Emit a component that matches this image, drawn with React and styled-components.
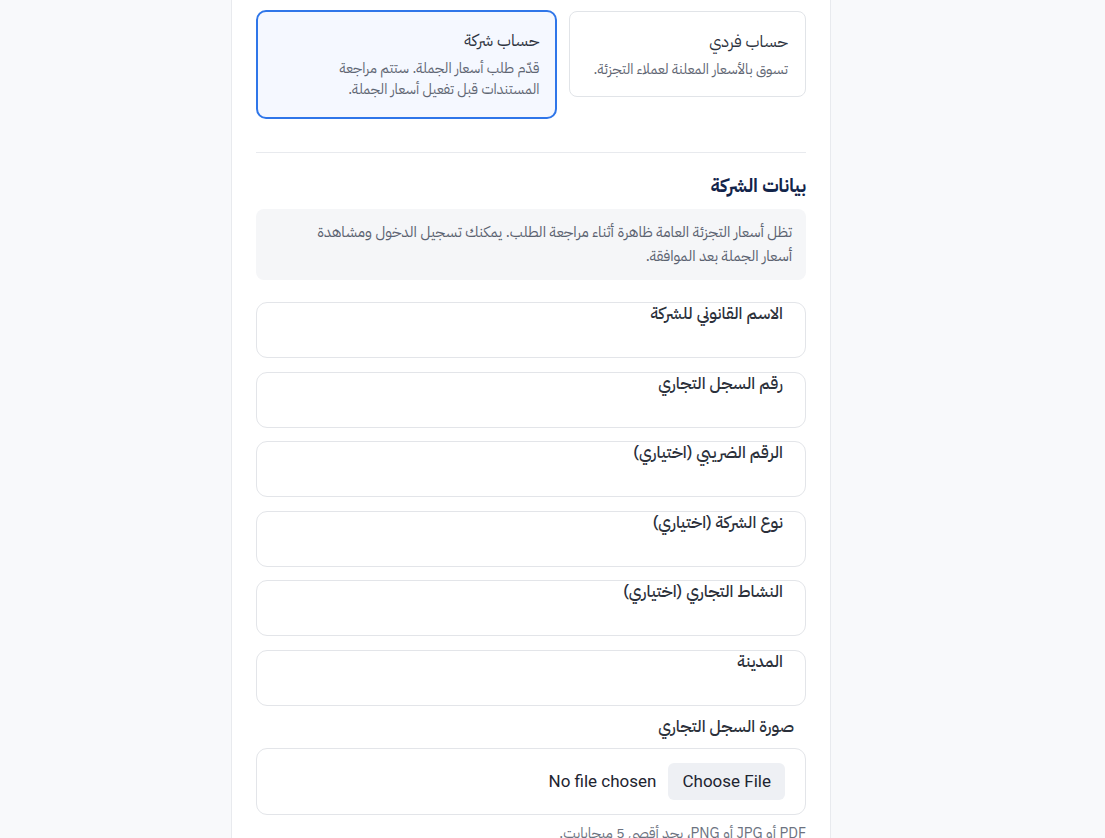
import React from 'react';
import styled, { createGlobalStyle } from 'styled-components';

const GlobalStyle = createGlobalStyle`
  html, body {
    margin: 0;
    padding: 0;
    background: #f8f9fb;
  }
  body {
    font-family: "IBM Plex Sans Arabic", "Noto Sans Arabic", "DejaVu Sans", sans-serif;
  }
`;

const Page = styled.div`
  display: flex;
  justify-content: center;
  padding-right: 43px;
  min-height: 838px;
`;

const Panel = styled.div`
  width: 550px;
  background: #ffffff;
  border-left: 1px solid #e8eaee;
  border-right: 1px solid #e8eaee;
  padding: 10px 24px 0;
  direction: rtl;
  display: flex;
  flex-direction: column;
`;

const AccountTypes = styled.div`
  display: grid;
  grid-template-columns: 237fr 302fr;
  gap: 12px;
  align-items: start;
`;

const AccountCard = styled.div`
  border: ${(p) => (p.$active ? '2px solid #2f76e9' : '1px solid #e1e4e8')};
  background: ${(p) => (p.$active ? '#f5f8ff' : '#ffffff')};
  border-radius: ${(p) => (p.$active ? '10px' : '8px')};
  padding: ${(p) => (p.$active ? '16px 16px 17px 16px' : '17px 17px 16px 17px')};
  margin-top: ${(p) => (p.$active ? '0' : '1px')};
`;

const AccountTitle = styled.div`
  font-size: 16.5px;
  color: #2d3340;
  line-height: 26px;
  margin-bottom: 4px;
`;

const AccountDesc = styled.div`
  font-size: 14.3px;
  color: #5f6673;
  line-height: 21px;
`;

const Divider = styled.hr`
  border: none;
  border-top: 1px solid #e8eaee;
  margin: 33px 0 20px;
`;

const SectionTitle = styled.h2`
  margin: 0 0 10px;
  font-size: 18.5px;
  font-weight: 700;
  color: #12244a;
  line-height: 26px;
`;

const Notice = styled.div`
  background: #f5f6f8;
  border-radius: 8px;
  padding: 11px 14px 12px 34px;
  font-size: 15px;
  line-height: 24px;
  color: #5b6270;
  margin-bottom: 22px;
`;

const Fields = styled.div`
  display: flex;
  flex-direction: column;
  gap: 13.6px;
`;

const FieldBox = styled.div`
  box-sizing: border-box;
  height: 56px;
  border: 1px solid #e3e5e9;
  border-radius: 11px;
  padding: 0 22px 0;
`;

const FieldLabel = styled.div`
  font-size: 16.8px;
  font-weight: 500;
  color: #2b303a;
  line-height: 22px;
`;

const UploadLabel = styled.div`
  font-size: 16.8px;
  font-weight: 500;
  color: #2b303a;
  line-height: 22px;
  padding: 10px 12px 0;
  margin-bottom: 10px;
`;

const UploadBox = styled.div`
  box-sizing: border-box;
  height: 67px;
  border: 1px solid #e3e5e9;
  border-radius: 11px;
  padding: 0 20px;
  display: flex;
  align-items: center;
  gap: 12px;
`;

const ChooseButton = styled.div`
  direction: ltr;
  background: #eef0f4;
  border-radius: 6px;
  padding: 0 14px;
  height: 37px;
  display: flex;
  align-items: center;
  font-family: "Roboto", "Liberation Sans", sans-serif;
  font-size: 17px;
  color: #1d2430;
`;

const FileStatus = styled.div`
  direction: ltr;
  font-family: "Roboto", "Liberation Sans", sans-serif;
  font-size: 17px;
  color: #1d2430;
`;

const Hint = styled.div`
  font-size: 14.5px;
  color: #6b7280;
  margin-top: 9px;
  line-height: 18px;
`;

const fields = [
  'الاسم القانوني للشركة',
  'رقم السجل التجاري',
  'الرقم الضريبي (اختياري)',
  'نوع الشركة (اختياري)',
  'النشاط التجاري (اختياري)',
  'المدينة',
];

export default function App() {
  return (
    <>
      <GlobalStyle />
      <Page>
        <Panel>
          <AccountTypes>
            <AccountCard>
              <AccountTitle>حساب فردي</AccountTitle>
              <AccountDesc>تسوق بالأسعار المعلنة لعملاء التجزئة.</AccountDesc>
            </AccountCard>
            <AccountCard $active>
              <AccountTitle>حساب شركة</AccountTitle>
              <AccountDesc>
                قدّم طلب أسعار الجملة. ستتم مراجعة
                <br />
                المستندات قبل تفعيل أسعار الجملة.
              </AccountDesc>
            </AccountCard>
          </AccountTypes>

          <Divider />

          <SectionTitle>بيانات الشركة</SectionTitle>
          <Notice>
            تظل أسعار التجزئة العامة ظاهرة أثناء مراجعة الطلب. يمكنك تسجيل الدخول ومشاهدة أسعار الجملة بعد الموافقة.
          </Notice>

          <Fields>
            {fields.map((label) => (
              <FieldBox key={label}>
                <FieldLabel>{label}</FieldLabel>
              </FieldBox>
            ))}
          </Fields>

          <UploadLabel>صورة السجل التجاري</UploadLabel>
          <UploadBox>
            <ChooseButton>Choose File</ChooseButton>
            <FileStatus>No file chosen</FileStatus>
          </UploadBox>
          <Hint>PDF أو JPG أو PNG، بحد أقصى 5 ميجابايت.</Hint>
        </Panel>
      </Page>
    </>
  );
}
